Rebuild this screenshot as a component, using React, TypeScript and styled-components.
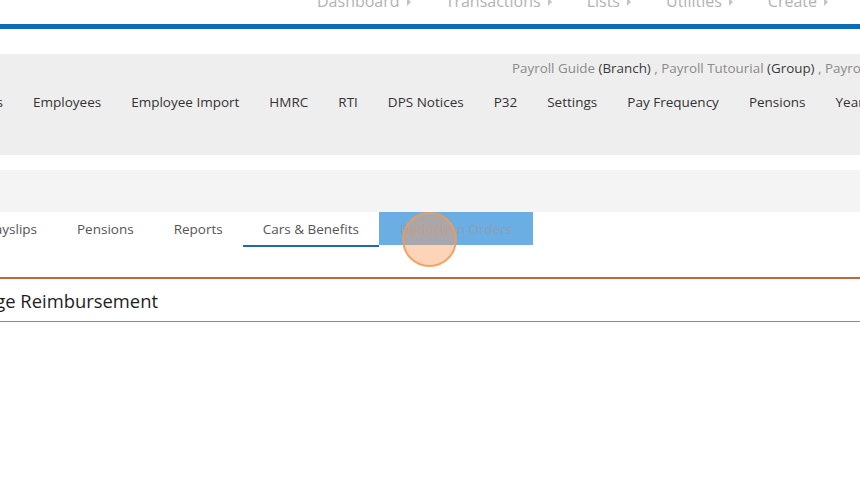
import styled, { createGlobalStyle } from "styled-components";

const GlobalStyle = createGlobalStyle`
  html, body { margin: 0; padding: 0; background: #fff; }
  body { font-family: "Open Sans", "Liberation Sans", sans-serif; }
`;

const Page = styled.div`
  width: 860px;
  height: 481px;
  overflow: hidden;
  background: #fff;
`;

const TopBar = styled.div`
  height: 24px;
  display: flex;
  justify-content: flex-end;
  align-items: flex-start;
  gap: 35px;
  padding-right: 32px;
  border-bottom: 5px solid #0b6cb8;
  overflow: hidden;
`;

const TopItem = styled.div`
  display: flex;
  align-items: center;
  gap: 7px;
  margin-top: -9px;
  font-size: 16px;
  line-height: 20px;
  color: #b3b3b3;
  white-space: nowrap;
`;

const Caret = styled.span`
  width: 0;
  height: 0;
  border-top: 4px solid transparent;
  border-bottom: 4px solid transparent;
  border-left: 4px solid #c4c4c4;
  margin-top: 2px;
`;

const Spacer = styled.div<{ $h: number }>`
  height: ${(p) => p.$h}px;
`;

const Band = styled.div`
  height: 101px;
  background: #efeeee;
  display: flex;
  flex-direction: column;
`;

const Crumbs = styled.div`
  display: flex;
  padding: 3px 0 0 512px;
  height: 22px;
  font-size: 13.4px;
  line-height: 22px;
  color: #8a8a8a;
  white-space: nowrap;
`;

const Strong = styled.span`
  color: #3a3a3a;
`;

const MenuRow = styled.div`
  display: flex;
  align-items: center;
  gap: 30px;
  margin-top: 13px;
  font-size: 13.5px;
  line-height: 20px;
  color: #333;
  white-space: nowrap;
`;

const Clip = styled.div<{ $w: number }>`
  width: ${(p) => p.$w}px;
  flex: none;
  display: flex;
  justify-content: flex-end;
`;

const MenuItem = styled.span`
  flex: none;
`;

const SubBand = styled.div`
  height: 42px;
  background: #f4f4f4;
`;

const TabRow = styled.div`
  position: relative;
  display: flex;
  height: 34px;
  font-size: 13.5px;
  color: #555;
  white-space: nowrap;
`;

const Tab = styled.div<{ $active?: boolean; $hover?: boolean }>`
  flex: none;
  padding: 0 ${(p) => (p.$hover ? 21 : 20)}px;
  height: 33px;
  line-height: 35px;
  border-bottom: ${(p) => (p.$hover ? "0" : "2px solid")};
  border-bottom-color: ${(p) => (p.$active ? "#1f6aa8" : "transparent")};
  background: ${(p) => (p.$hover ? "#6aaee3" : "transparent")};
  color: ${(p) => (p.$hover ? "#8c9fb2" : "#555")};
`;

const ClickRing = styled.div`
  position: absolute;
  left: 402px;
  top: 0px;
  width: 51px;
  height: 51px;
  border-radius: 50%;
  background: rgba(250, 160, 95, 0.45);
  border: 2px solid rgba(240, 155, 85, 0.85);
  pointer-events: none;
`;

const Section = styled.div`
  margin-top: 31px;
  border-top: 2px solid #c8643c;
  border-bottom: 1px solid #c07a5a;
  height: 42px;
  display: flex;
  align-items: center;
`;

const Heading = styled.h2`
  margin: 0;
  font-size: 18.4px;
  font-weight: 400;
  color: #1e1e1e;
  white-space: nowrap;
`;

const topItems = ["Dashboard", "Transactions", "Lists", "Utilities", "Create"];
const menu = [
  "Employees",
  "Employee Import",
  "HMRC",
  "RTI",
  "DPS Notices",
  "P32",
  "Settings",
  "Pay Frequency",
  "Pensions",
  "Year End",
];

export default function App() {
  return (
    <>
      <GlobalStyle />
      <Page>
        <TopBar>
          {topItems.map((t) => (
            <TopItem key={t}>
              {t}
              <Caret />
            </TopItem>
          ))}
        </TopBar>
        <Spacer $h={25} />
        <Band>
          <Crumbs>
            Payroll Guide&nbsp;<Strong>(Branch)</Strong>&nbsp;, Payroll Tutourial&nbsp;
            <Strong>(Group)</Strong>&nbsp;, Payroll Company
          </Crumbs>
          <MenuRow>
            <Clip $w={3}>
              <MenuItem>Reports</MenuItem>
            </Clip>
            {menu.map((m) => (
              <MenuItem key={m}>{m}</MenuItem>
            ))}
          </MenuRow>
        </Band>
        <Spacer $h={15} />
        <SubBand />
        <TabRow>
          <Clip $w={57}>
            <Tab>Payslips</Tab>
          </Clip>
          <Tab>Pensions</Tab>
          <Tab>Reports</Tab>
          <Tab $active>Cars &amp; Benefits</Tab>
          <Tab $hover>Deduction Orders</Tab>
          <ClickRing />
        </TabRow>
        <Section>
          <Clip $w={158}>
            <Heading>Mileage Reimbursement</Heading>
          </Clip>
        </Section>
      </Page>
    </>
  );
}
